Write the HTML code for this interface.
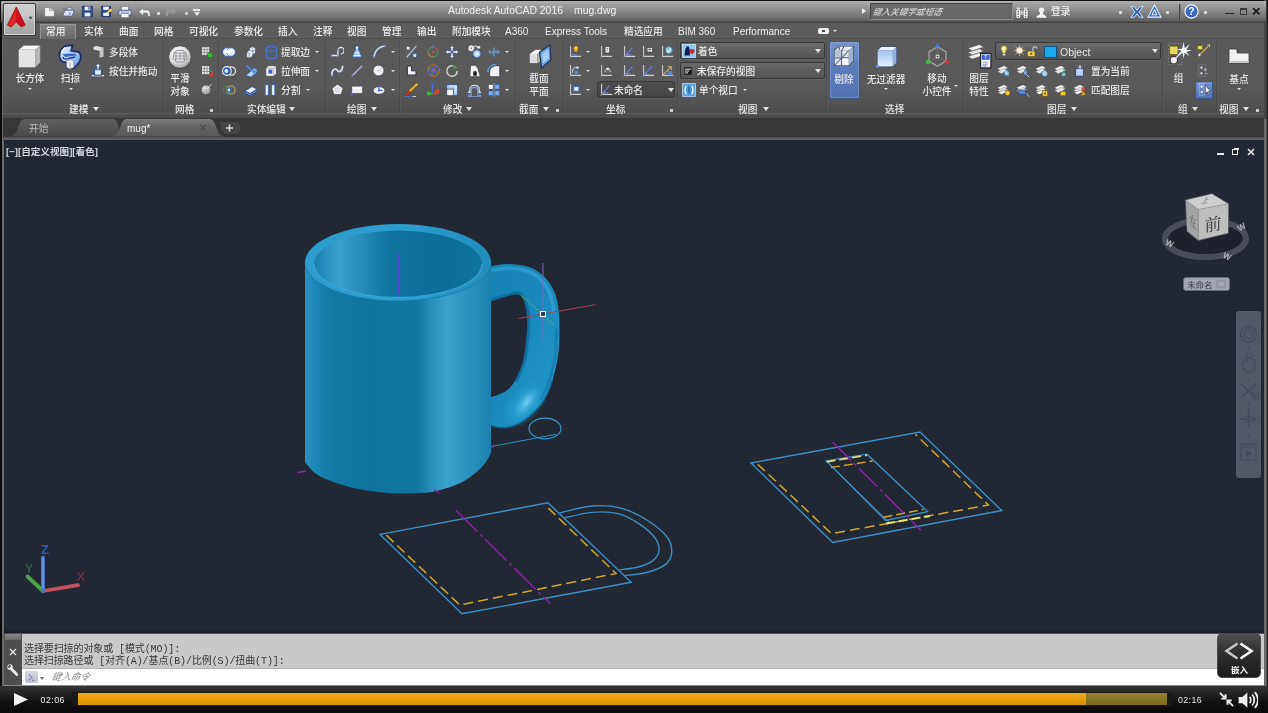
<!DOCTYPE html>
<html lang="zh-CN">
<head>
<meta charset="utf-8">
<title>Autodesk AutoCAD 2016 mug.dwg</title>
<style>
*{box-sizing:border-box;margin:0;padding:0}
html,body{width:1268px;height:713px;overflow:hidden;background:#000}
body{font-family:"Liberation Sans","Noto Sans CJK SC",sans-serif;font-size:10px;color:#e8e8e8;position:relative}
#app{position:absolute;left:0;top:0;width:1268px;height:713px;overflow:hidden;background:#0a0a0a}
#app div,#app span,#app svg,#app i,#app b{position:absolute;display:block;font-style:normal}
#frameL{left:1.5px;top:36px;width:2.5px;height:650px;background:#6c6c6c}
#frameR{left:1264px;top:0;width:4px;height:686px;background:linear-gradient(90deg,#6a6a6a 0,#6a6a6a 2.4px,#1a1a1a 2.8px,#1a1a1a 100%)}#frameR2{left:1264px;top:0;width:4px;height:119px;background:linear-gradient(90deg,#484848 0,#444 2.4px,#1a1a1a 2.8px,#1a1a1a 100%)}
#title{left:1.2px;top:1px;width:1264.8px;height:21.5px;background:linear-gradient(#b4b4b4 0,#a6a6a6 8%,#8e8e8e 40%,#747474 70%,#5e5e5e 90%,#484848 96%,#3a3a3a 100%)}
#menubar{left:2px;top:22.5px;width:1262px;height:16px;background:#5c5c5c}
#ribbon{left:3px;top:38px;width:1261px;height:81px;background:linear-gradient(#4a4a4a 0,#5a5a5a 1.5px,#595959 50px,#535353 62px,#4e4e4e 74.5px,#5a5a5a 75.5px,#4d4d4d 77px,#4a4a4a 79.5px,#383838 80px,#383838 81px)}
#tabbar{left:3px;top:119px;width:1261px;height:18px;background:#373737}
#tabline{left:3px;top:136.5px;width:1261px;height:4px;background:linear-gradient(#4a4e52,#5a6065 40%,#5a6065 70%,#3a404a)}
#draw{left:4px;top:140px;width:1260px;height:493px;background:#212733}
#cmd{left:4px;top:633px;width:1260px;height:53px;background:#c9c9c9}
#player{left:0;top:686px;width:1268px;height:27px;background:linear-gradient(#333 0,#222 30%,#111 60%,#0a0a0a 100%)}
#L{left:0;top:0;width:1268px;height:713px;filter:blur(.5px)}
.t{white-space:nowrap;line-height:12px;height:12px;font-size:9.7px;color:#e8e8e8;font-weight:500}
.sep{width:1px;height:72px;top:42px;background:#444;box-shadow:1px 0 0 #606060;opacity:.55}
.dd{width:0;height:0;border-left:3px solid transparent;border-right:3px solid transparent;border-top:4px solid #e4e4e4}
.dd2{width:0;height:0;border-left:2px solid transparent;border-right:2px solid transparent;border-top:2.5px solid #e0e0e0}
.combo{border:1px solid #383838;border-radius:2px;background:linear-gradient(#6a6a6a,#5e5e5e 45%,#545454);box-shadow:0 1px 0 #626262}
</style>
</head>
<body>
<div id="app">
<div id="frameL"></div><div id="frameR"></div><div id="frameR2"></div><div id="title"></div><div id="menubar"></div><div id="ribbon"></div><div id="tabbar"></div><div id="tabline"></div><div id="draw"></div><div id="cmd"></div><div id="player"></div>
<div id="L">
<span class="t" style="left:448px;top:5px;font-size:10.4px;color:#f2f2f2;">Autodesk AutoCAD 2016</span>
<span class="t" style="left:574px;top:5px;font-size:10.4px;color:#f2f2f2;">mug.dwg</span>
<div style="left:3px;top:3px;width:33px;height:32.5px;border:1.4px solid #3c3c3c;border-radius:2px;background:linear-gradient(#cfcfcf,#c2c2c2 45%,#b0b0b0 60%,#a6a6a6);box-shadow:inset 0 0 0 1px #d8d8d8"></div>
<svg style="left:6px;top:5px" width="28" height="28" viewBox="0 0 28 28"><path d="M3 22.5 C7 26.5 14 26.5 18 22.5" fill="none" stroke="#7ab48a" stroke-width="2.2" opacity=".5"/><path d="M5 24.5 C8 27 13 27 16 24.5" fill="none" stroke="#c890b0" stroke-width="1.5" opacity=".4"/><path d="M10.3 2 L19.1 20 L15.2 21.9 L10.3 17 L5.2 21.9 L1.5 20Z" fill="#cc0f1b" stroke="#a40c14" stroke-width="0.8" /><path d="M10.3 4 L10.3 17 L5.6 21 L2.6 19.6Z" fill="#e02626" /><path d="M22.6 11.8 L26.6 11.8 L24.6 14.6Z" fill="#3a4660" /></svg>
<svg style="left:42.5px;top:5px" width="13" height="13" viewBox="0 0 16 16"><path d="M2 3 H8 V6.5 H14 V14 H2Z" fill="#f4f4f4" stroke="#555" stroke-width="0.6" /><path d="M8 3 L14 6.5 H8Z" fill="#c8c8c8" /></svg>
<svg style="left:61.5px;top:5px" width="13" height="13" viewBox="0 0 16 16"><path d="M1 5 H6 L7.5 3.5 H12 V5.5" fill="#e4e8f8" stroke="#445" stroke-width="0.6" /><path d="M1 13.5 L3.5 6.5 H15 L12.5 13.5Z" fill="#dfe4fa" stroke="#3a4a8a" stroke-width="0.8" /><path d="M8 9 L11 10.5 L8 12" fill="none" stroke="#6a7ad0" stroke-width="1" /></svg>
<svg style="left:80.5px;top:4.5px" width="13" height="13" viewBox="0 0 16 16"><rect x="2" y="1.5" width="12" height="13" fill="#2f4c8e" stroke="#1c2c5a" stroke-width="0.8" /><rect x="4.5" y="2" width="7" height="4.5" fill="#f4f4f4" /><rect x="4.5" y="9.5" width="7" height="4.5" fill="#e8ecf8" /><rect x="9" y="2.6" width="1.6" height="3" fill="#2f4c8e" /></svg>
<svg style="left:99.5px;top:4.5px" width="13" height="13" viewBox="0 0 16 16"><rect x="2" y="1.5" width="11" height="13" fill="#2f4c8e" stroke="#1c2c5a" stroke-width="0.8" /><rect x="4" y="2" width="7" height="4" fill="#f4f4f4" /><rect x="4" y="9.5" width="7" height="4" fill="#e8ecf8" /><path d="M9 6 L15 4 L14 9Z" fill="#f0c030" stroke="#8a6a10" stroke-width="0.5" /><path d="M8 10 L14 6" fill="none" stroke="#f4d860" stroke-width="1.6" /></svg>
<svg style="left:118px;top:4.5px" width="14" height="14" viewBox="0 0 16 16"><rect x="4" y="1.5" width="8" height="4.5" fill="#f4f4f4" stroke="#556" stroke-width="0.6" /><path d="M1 6 H15 V11.5 H1Z" fill="#dfe6f6" stroke="#3a4a78" stroke-width="0.8" /><rect x="3.5" y="10" width="9" height="4.5" fill="#f8f8f8" stroke="#556" stroke-width="0.6" /><path d="M3 8 H13" fill="none" stroke="#7a8ad0" stroke-width="1" /></svg>
<svg style="left:137.5px;top:5.5px" width="13" height="13" viewBox="0 0 16 16"><path d="M1 7 L6.5 2 V5 H11 C14 5 15 8 15 11 V13 H12 V11 C12 9 11.5 8.5 10 8.5 H6.5 V12Z" fill="#f0f0f0" stroke="#555" stroke-width="0.5" /></svg>
<div style="left:157px;top:12px;width:3px;height:3px;background:#ddd;border-radius:1px"></div>
<svg style="left:165px;top:6px" width="12" height="12" viewBox="0 0 16 16"><path d="M15 7 L9.5 2 V5 H5 C2 5 1 8 1 11 V13 H4 V11 C4 9 4.5 8.5 6 8.5 H9.5 V12Z" fill="#9a9a9a" /></svg>
<div style="left:185px;top:12px;width:3px;height:3px;background:#ccc;border-radius:1px"></div>
<i style="left:193px;top:9px;width:7px;height:1.5px;background:#e8e8e8"></i>
<i class="dd" style="left:193.5px;top:11.5px"></i>
<div style="left:40px;top:23.5px;width:36px;height:15px;background:linear-gradient(#808080,#686868);border:1px solid #949494;border-bottom:none"></div>
<span class="t" style="left:46px;top:26px;color:#ececec;">常用</span>
<span class="t" style="left:84px;top:26px;color:#ececec;">实体</span>
<span class="t" style="left:119px;top:26px;color:#ececec;">曲面</span>
<span class="t" style="left:154px;top:26px;color:#ececec;">网格</span>
<span class="t" style="left:189px;top:26px;color:#ececec;">可视化</span>
<span class="t" style="left:234px;top:26px;color:#ececec;">参数化</span>
<span class="t" style="left:278px;top:26px;color:#ececec;">插入</span>
<span class="t" style="left:313px;top:26px;color:#ececec;">注释</span>
<span class="t" style="left:347px;top:26px;color:#ececec;">视图</span>
<span class="t" style="left:382px;top:26px;color:#ececec;">管理</span>
<span class="t" style="left:417px;top:26px;color:#ececec;">输出</span>
<span class="t" style="left:452px;top:26px;color:#ececec;">附加模块</span>
<span class="t" style="left:505px;top:26px;font-size:10px;color:#ececec;">A360</span>
<span class="t" style="left:545px;top:26px;font-size:10px;color:#ececec;">Express Tools</span>
<span class="t" style="left:624px;top:26px;color:#ececec;">精选应用</span>
<span class="t" style="left:678px;top:26px;font-size:10px;color:#ececec;">BIM 360</span>
<span class="t" style="left:733px;top:26px;font-size:10px;color:#ececec;">Performance</span>
<div style="left:818px;top:28px;width:11px;height:6px;background:#f0f0f0;border-radius:2px"></div>
<div style="left:822px;top:30px;width:3px;height:2px;background:#444"></div>
<i class="dd2" style="left:833px;top:30.3px"></i>
<i style="left:862px;top:7.5px;width:0;height:0;border-top:3.5px solid transparent;border-bottom:3.5px solid transparent;border-left:4.5px solid #eee"></i>
<div style="left:870px;top:3px;width:143px;height:17px;background:linear-gradient(#6a6a6a,#666);border:1px solid #484848;border-right-color:#8c8c8c;border-bottom-color:#8c8c8c"></div>
<span class="t" style="left:873px;top:6px;font-size:8.6px;color:#d6d6d6;font-style:italic;transform:skewX(-12deg);">键入关键字或短语</span>
<svg style="left:1015px;top:5.5px" width="14" height="14" viewBox="0 0 16 16"><rect x="1" y="3.5" width="5.6" height="10.5" fill="#f0f0f0" stroke="#3a3a3a" stroke-width="0.6" rx="1.8"/><rect x="9.4" y="3.5" width="5.6" height="10.5" fill="#f0f0f0" stroke="#3a3a3a" stroke-width="0.6" rx="1.8"/><rect x="6.4" y="5.5" width="3.2" height="4.5" fill="#c8c8c8" /><path d="M3.8 5.5 V12.5 M12.2 5.5 V12.5" fill="none" stroke="#4a4a4a" stroke-width="1.3" stroke-dasharray="1.6 1.3"/><rect x="2" y="1.8" width="3.6" height="2" fill="#e0e0e0" /><rect x="10.4" y="1.8" width="3.6" height="2" fill="#e0e0e0" /></svg>
<svg style="left:1035px;top:5.5px" width="13" height="13" viewBox="0 0 16 16"><circle cx="8" cy="5" r="3.3" fill="#f2f2f2" /><path d="M6 7.5 H10 V10 L14 12.5 V14.5 H2 V12.5 L6 10Z" fill="#f2f2f2" /></svg>
<span class="t" style="left:1051px;top:6px;color:#f0f0f0;">登录</span>
<div style="left:1119px;top:11px;width:3px;height:3px;background:#ddd;border-radius:1px"></div>
<svg style="left:1129.5px;top:4.5px" width="14" height="14" viewBox="0 0 16 16"><path d="M1 2 H5 L8 6 L11 2 H15 L10.2 8 L15 14 H11 L8 10 L5 14 H1 L5.8 8Z" fill="#2f63b4" stroke="#e4eefc" stroke-width="1" /></svg>
<svg style="left:1147px;top:3.5px" width="15" height="15" viewBox="0 0 16 16"><path d="M8 1 L15 14 H1Z" fill="#3a6cc0" stroke="#e8f0fc" stroke-width="1.1" /><path d="M8 5 L11.5 12 H4.5Z" fill="#e8f0fc" /><path d="M8 7.5 L9.8 11 H6.2Z" fill="#3a6cc0" /></svg>
<div style="left:1166px;top:11px;width:3px;height:3px;background:#ddd;border-radius:1px"></div>
<div style="left:1179px;top:4px;width:1px;height:16px;background:#444;box-shadow:1px 0 0 #777"></div>
<svg style="left:1183.5px;top:4px" width="15" height="15" viewBox="0 0 16 16"><circle cx="8" cy="8" r="7" fill="#3868c4" stroke="#f2f6ff" stroke-width="1.3" /><text x="8" y="12" font-size="11" font-weight="bold" text-anchor="middle" fill="#fff" font-family="Liberation Sans,sans-serif">?</text></svg>
<div style="left:1204px;top:11px;width:3px;height:3px;background:#ddd;border-radius:1px"></div>
<div style="left:1224.5px;top:12.5px;width:9px;height:1.8px;background:#222"></div>
<div style="left:1240px;top:8px;width:7px;height:7px;border:1px solid #3a3a3a;border-top-width:2px"></div>
<svg style="left:1252.25px;top:6.75px" width="8.5" height="8.5" viewBox="0 0 16 16"><path d="M2 2 L14 14 M14 2 L2 14" fill="none" stroke="#1c1c1c" stroke-width="3.2" /></svg>
<i class="sep" style="left:163px"></i>
<i class="sep" style="left:218px"></i>
<i class="sep" style="left:325px"></i>
<i class="sep" style="left:399px"></i>
<i class="sep" style="left:515px"></i>
<i class="sep" style="left:563px"></i>
<i class="sep" style="left:677px"></i>
<i class="sep" style="left:826px"></i>
<i class="sep" style="left:963px"></i>
<i class="sep" style="left:1162px"></i>
<i class="sep" style="left:1215.5px"></i>
<svg style="left:17px;top:43.5px" width="25" height="25" viewBox="0 0 24 24"><path d="M1 5 L6 1 L23 1 L23 18 L18 23 L1 23Z" fill="#3a3a3a" /><path d="M1.5 5.5 L6.3 1.5 L22.5 1.5 L17.7 5.5Z" fill="#f6f6f6" /><path d="M17.7 5.5 L22.5 1.5 L22.5 17.7 L17.7 22.5Z" fill="#b4b4b4" /><rect x="1.5" y="5.5" width="16.2" height="17" fill="#e4e4e6" /></svg>
<span class="t" style="left:-30px;width:120px;text-align:center;top:73px;">长方体</span>
<i class="dd2" style="left:28px;top:87.8px"></i>
<svg style="left:57px;top:43.5px" width="25" height="25" viewBox="0 0 24 24"><defs><linearGradient id="gsw" x1="0" y1="0" x2="1" y2="1"><stop offset="0" stop-color="#e4f0ff"/><stop offset=".5" stop-color="#a9ccf6"/><stop offset="1" stop-color="#5a92e0"/></linearGradient></defs><path d="M2.5 12.5 C1.5 7 6 2 10 1.5 L15 1.5 L13.5 6.5 L20.5 7.5 C24 9.5 23 15 21 18 L16.5 23 L9.5 23 L9 17.5 L5.5 17 C3.5 16 2.8 14.5 2.5 12.5Z" fill="url(#gsw)" stroke="#1c2c66" stroke-width="1.6" /><path d="M5 9.5 L17 9 L19 11 L8 12.5Z" fill="#3c6cc4" /><path d="M5.5 12.5 C6 14 7 14.5 8.5 14.5 L17.5 12.5" fill="none" stroke="#24408c" stroke-width="1.3" /><path d="M8 3.5 C6 5 4.5 7 4.5 9" fill="none" stroke="#f4f9ff" stroke-width="1.6" /><path d="M9 16.8 L12.5 15.6 L16.2 16.8 L16.2 22.6 L12.5 24 L9 22.6Z" fill="#f2f2f2" stroke="#6a6a72" stroke-width="0.6" /><path d="M9 16.8 L12.5 18 L16.2 16.8 M12.5 18 V24" fill="none" stroke="#a4a4ac" stroke-width="0.7" /><path d="M9 16.8 L12.5 15.6 L16.2 16.8 L12.5 18Z" fill="#fdfdfd" /></svg>
<span class="t" style="left:10.5px;width:120px;text-align:center;top:73px;">扫掠</span>
<i class="dd2" style="left:69px;top:87.8px"></i>
<svg style="left:92px;top:45px" width="13" height="13" viewBox="0 0 16 16"><path d="M1.5 2.5 L5 1 L14 3 L14 14.5 L9.5 15.5 L9.5 7.5 L1.5 5.8Z" fill="#ececec" stroke="#444" stroke-width="0.5" /><path d="M9.5 7.5 L14 3" fill="none" stroke="#8a8a8a" stroke-width="0.7" /><path d="M1.5 2.5 L9.8 4.6 L14 3" fill="none" stroke="#b0b0b0" stroke-width="0.6" /><path d="M9.5 7.5 V15.5 L14 14.5 V3Z" fill="#c4c4c8" /></svg>
<span class="t" style="left:109px;top:46.5px;">多段体</span>
<svg style="left:91px;top:63px" width="14" height="14" viewBox="0 0 16 16"><path d="M1 14.5 H15" fill="none" stroke="#dfe8ff" stroke-width="1.4" /><rect x="4" y="7" width="8" height="7" fill="#a8c8f0" stroke="#2d4f94" stroke-width="1" /><path d="M8 0.5 L11 4 H9.2 V7 H6.8 V4 H5Z" fill="#f4f4f4" stroke="#2d4f94" stroke-width="0.7" /><rect x="5.5" y="9" width="5" height="3.5" fill="#e8f2ff" /></svg>
<span class="t" style="left:109px;top:65.5px;">按住并拖动</span>
<span class="t" style="left:69px;top:103.6px;">建模</span>
<i class="dd" style="left:93px;top:106.5px"></i>
<svg style="left:168px;top:44.5px" width="24" height="24" viewBox="0 0 24 24"><defs><radialGradient id="gs" cx=".4" cy=".35" r=".7"><stop offset="0" stop-color="#fff"/><stop offset=".6" stop-color="#dcdcdc"/><stop offset="1" stop-color="#9c9c9c"/></radialGradient></defs><circle cx="12" cy="12" r="11.3" fill="url(#gs)" stroke="#3c3c3c" stroke-width="0.8" /><path d="M6 8 L18 8 L19 14 L5 14Z M8 8 V14 M12 8 V14 M16 8 V14 M5.5 11 H18.5 M7 14 L8 17 H16 L17 14 M9 5.5 H15 L18 8 M9 5.5 L6 8" fill="none" stroke="#8a8a92" stroke-width="0.9" /></svg>
<span class="t" style="left:120px;width:120px;text-align:center;top:72.5px;">平滑</span>
<span class="t" style="left:120px;width:120px;text-align:center;top:85.5px;">对象</span>
<svg style="left:200px;top:44.5px" width="14" height="14" viewBox="0 0 16 16"><rect x="2" y="2" width="9" height="10" fill="#ececec" stroke="#4a4a4a" stroke-width="0.8" /><path d="M2 5.3 H11 M2 8.6 H11 M5 2 V12 M8 2 V12" fill="none" stroke="#777" stroke-width="0.8" /><circle cx="11.5" cy="11.5" r="3.2" fill="#38b838" stroke="#1c5a1c" stroke-width="0.6" /></svg>
<svg style="left:200px;top:63.5px" width="14" height="14" viewBox="0 0 16 16"><rect x="2" y="2" width="9" height="10" fill="#ececec" stroke="#4a4a4a" stroke-width="0.8" /><path d="M2 5.3 H11 M2 8.6 H11 M5 2 V12 M8 2 V12" fill="none" stroke="#777" stroke-width="0.8" /><path d="M9 14 L15 8 L15 14Z" fill="#d63a2a" /><path d="M9 9 L14 6 L14 9Z" fill="#2c8a8a" /></svg>
<svg style="left:199.5px;top:82.5px" width="13" height="13" viewBox="0 0 16 16"><defs><radialGradient id="gm3" cx=".4" cy=".35" r=".7"><stop offset="0" stop-color="#f4f4f4"/><stop offset="1" stop-color="#8c8c8c"/></radialGradient></defs><circle cx="7.5" cy="8.5" r="6" fill="url(#gm3)" stroke="#444" stroke-width="0.7" /><path d="M9 7 L14 1.5" fill="none" stroke="#ddd" stroke-width="1.2" /><path d="M3 8.5 H12 M7.5 3 V14" fill="none" stroke="#999" stroke-width="0.6" /></svg>
<span class="t" style="left:175px;top:103.6px;">网格</span>
<i style="left:210px;top:109px;width:3px;height:3px;background:#ccc"></i>
<svg style="left:222px;top:44.5px" width="14" height="14" viewBox="0 0 16 16"><circle cx="5.6" cy="8" r="5" fill="#dce9fc" stroke="#3a62b4" stroke-width="1.1" /><circle cx="10.4" cy="8" r="5" fill="#dce9fc" stroke="#3a62b4" stroke-width="1.1" /><path d="M8 3.8 A5 5 0 0 1 8 12.2 A5 5 0 0 1 8 3.8Z" fill="#f2f7ff" /><circle cx="5" cy="7" r="2" fill="#f6faff" /><circle cx="11" cy="7" r="2" fill="#f6faff" /></svg>
<svg style="left:222px;top:63.5px" width="14" height="14" viewBox="0 0 16 16"><circle cx="10.6" cy="8" r="4.8" fill="none" stroke="#e4e4e4" stroke-width="1.4" /><circle cx="5.6" cy="8" r="5" fill="#2f5cb4" stroke="#eef3fc" stroke-width="1.2" /><circle cx="5" cy="8" r="2.2" fill="#dce8fc" /></svg>
<svg style="left:222px;top:82.5px" width="14" height="14" viewBox="0 0 16 16"><circle cx="5.8" cy="8" r="4.6" fill="none" stroke="#4a8a4a" stroke-width="1.1" /><circle cx="10.2" cy="8" r="4.6" fill="none" stroke="#c8b860" stroke-width="1.1" /><path d="M8 4.2 A4.6 4.6 0 0 1 8 11.8 A4.6 4.6 0 0 1 8 4.2Z" fill="#5a8ee0" stroke="#2a56b0" stroke-width="0.8" /><circle cx="8" cy="8" r="1.3" fill="#dcecff" /></svg>
<svg style="left:244px;top:44.5px" width="14" height="14" viewBox="0 0 16 16"><path d="M3 14 V8 L6 6 V4 L9 2 L13 3 V9 L10 11 V13 L6 15Z" fill="#e8eef8" stroke="#333" stroke-width="0.6" /><path d="M6 6 L10 7 L13 5 M10 7 V13" fill="none" stroke="#5a7ab8" stroke-width="0.8" /><path d="M3 8 L6 9.5 V15" fill="none" stroke="#5a7ab8" stroke-width="0.8" /><path d="M9 2 L10 7" fill="none" stroke="#9ab" stroke-width="0.6" /></svg>
<svg style="left:244px;top:63.5px" width="14" height="14" viewBox="0 0 16 16"><path d="M2 13 L9 7 L15 9 L8 15Z" fill="#b8d4f4" stroke="#2a4a8a" stroke-width="0.8" /><path d="M3 2 L13 11" fill="none" stroke="#3a6ac8" stroke-width="2" /><path d="M3 2 L13 11" fill="none" stroke="#9cc0f0" stroke-width="0.8" /><path d="M9 7 L11 4 L15 6 V9" fill="#7aaae8" stroke="#2a4a8a" stroke-width="0.6" /></svg>
<svg style="left:244px;top:82.5px" width="14" height="14" viewBox="0 0 16 16"><path d="M1 9 L9 4 L15 7 L7 12Z" fill="#f0f4fa" stroke="#2a4a8a" stroke-width="0.8" /><path d="M1 9 V11.5 L7 14.5 L15 9.5 V7 L7 12Z" fill="#5a8edc" stroke="#2a4a8a" stroke-width="0.8" /><path d="M3 8 L10 4" fill="none" stroke="#2a4a8a" stroke-width="0.6" /></svg>
<svg style="left:263.5px;top:44.5px" width="15" height="15" viewBox="0 0 16 16"><ellipse cx="8" cy="4" rx="5.5" ry="2.5" fill="none" stroke="#4a76d0" stroke-width="1.2" /><path d="M2.5 4 V12 A5.5 2.5 0 0 0 13.5 12 V4" fill="none" stroke="#4a76d0" stroke-width="1.2" /><path d="M2.5 12 A5.5 2.5 0 0 1 13.5 12" fill="none" stroke="#4a76d0" stroke-width="0.8" stroke-dasharray="1.5 1"/><path d="M6 3 V13.5 M10 3 V13.5" fill="none" stroke="#3a5eb0" stroke-width="0.8" /></svg>
<span class="t" style="left:281px;top:46.5px;">提取边</span>
<i class="dd2" style="left:315px;top:50.8px"></i>
<svg style="left:264px;top:63.5px" width="14" height="14" viewBox="0 0 16 16"><path d="M2 5 L5 2 H14 V11 L11 14 H2Z" fill="#f2f2f2" stroke="#3a3a3a" stroke-width="0.7" /><rect x="5" y="6.5" width="4.5" height="4.5" fill="#3a66c0" /><path d="M2 5 H11 V14 M11 5 L14 2" fill="none" stroke="#8a8a8a" stroke-width="0.7" /></svg>
<span class="t" style="left:281px;top:65.5px;">拉伸面</span>
<i class="dd2" style="left:315px;top:69.8px"></i>
<svg style="left:263px;top:82.5px" width="14" height="14" viewBox="0 0 16 16"><rect x="2.5" y="2" width="3.6" height="12" fill="#eef4fc" stroke="#3a66c0" stroke-width="1" /><rect x="9.9" y="2" width="3.6" height="12" fill="#eef4fc" stroke="#3a66c0" stroke-width="1" /></svg>
<span class="t" style="left:281px;top:84.5px;">分割</span>
<i class="dd2" style="left:306px;top:88.8px"></i>
<span class="t" style="left:247px;top:103.6px;">实体编辑</span>
<i class="dd" style="left:289px;top:106.5px"></i>
<svg style="left:330px;top:44.5px" width="14" height="14" viewBox="0 0 16 16"><path d="M1.5 12 H9 V6.5 A3.6 3.6 0 1 1 12.5 10" fill="none" stroke="#dfe6fa" stroke-width="1.5" /><rect x="0.5" y="11" width="2" height="2" fill="#7a8edc" /><rect x="8" y="11" width="2" height="2" fill="#7a8edc" /><rect x="8" y="4.5" width="2" height="2" fill="#7a8edc" /></svg>
<svg style="left:349.5px;top:44.5px" width="14" height="14" viewBox="0 0 16 16"><path d="M8 1 C10 1 10.5 3.5 9.5 4.5 L13.5 14 H2.5 L6.5 4.5 C5.5 3.5 6 1 8 1Z" fill="#9ccaf4" stroke="#2c5a98" stroke-width="0.8" /><path d="M5 9 H11 M4 12 H12" fill="none" stroke="#e8f4ff" stroke-width="1" /><circle cx="8" cy="3" r="1.4" fill="#e8f4ff" /></svg>
<svg style="left:371.5px;top:43.5px" width="15" height="15" viewBox="0 0 16 16"><path d="M2 14 C3 7 7 3 14 2" fill="none" stroke="#9fb6e6" stroke-width="2" /><path d="M2 14 C3 7 7 3 14 2" fill="none" stroke="#dce8ff" stroke-width="0.8" /><rect x="1" y="13" width="2" height="2" fill="#6a7ed0" /><rect x="13" y="1" width="2" height="2" fill="#6a7ed0" /></svg>
<i class="dd2" style="left:390.5px;top:50.8px"></i>
<svg style="left:329.5px;top:63px" width="15" height="15" viewBox="0 0 16 16"><path d="M2 13 C2 5 7 6 8 8 C9 10 13 10 13.5 3" fill="none" stroke="#c4cce8" stroke-width="2" /><path d="M2 13 C2 5 7 6 8 8 C9 10 13 10 13.5 3" fill="none" stroke="#eef2ff" stroke-width="0.7" /><rect x="1" y="12.5" width="2" height="2" fill="#7a8edc" /></svg>
<svg style="left:349.5px;top:63.5px" width="14" height="14" viewBox="0 0 16 16"><path d="M2.5 13.5 L13.5 2.5" fill="none" stroke="#b4b4e0" stroke-width="1.6" /><rect x="1.5" y="12.5" width="2" height="2" fill="#6a6ec8" /><rect x="12.5" y="1.5" width="2" height="2" fill="#8a8ed8" /></svg>
<svg style="left:372px;top:64px" width="13" height="13" viewBox="0 0 16 16"><defs><radialGradient id="gc"><stop offset="0" stop-color="#c8c8d0"/><stop offset=".35" stop-color="#f4f4f8"/><stop offset="1" stop-color="#e8e8ee"/></radialGradient></defs><circle cx="8" cy="8" r="6.6" fill="url(#gc)" stroke="#3c3c44" stroke-width="0.6" /><path d="M8 8 L12 5" fill="none" stroke="#aaa" stroke-width="0.7" /></svg>
<i class="dd2" style="left:390.5px;top:69.8px"></i>
<svg style="left:330.5px;top:83px" width="13" height="13" viewBox="0 0 16 16"><path d="M8 1.5 L14.8 6.5 L12.2 14.2 H3.8 L1.2 6.5Z" fill="#f4f4f8" stroke="#44444c" stroke-width="0.8" /><path d="M8 4 L12 7 L10.5 12 H5.5 L4 7Z" fill="#dcdce4" /></svg>
<svg style="left:349.5px;top:82.5px" width="14" height="14" viewBox="0 0 16 16"><rect x="2" y="3.5" width="12.5" height="8.5" fill="#ececf2" stroke="#44444c" stroke-width="0.8" /><rect x="0.8" y="11.5" width="2.4" height="2.4" fill="#5a6ed0" /><path d="M3 6 H13" fill="none" stroke="#fff" stroke-width="1.5" /></svg>
<svg style="left:371.5px;top:82.5px" width="14" height="14" viewBox="0 0 16 16"><ellipse cx="8" cy="8.5" rx="6.8" ry="4.4" fill="#ececf2" stroke="#34343c" stroke-width="0.8" /><path d="M8 2 V8.5 H12" fill="none" stroke="#3a62c8" stroke-width="1.3" /><circle cx="8" cy="8.5" r="1.2" fill="#3a62c8" /></svg>
<i class="dd2" style="left:390.5px;top:88.8px"></i>
<span class="t" style="left:347px;top:103.6px;">绘图</span>
<i class="dd" style="left:371px;top:106.5px"></i>
<svg style="left:404.5px;top:44.5px" width="14" height="14" viewBox="0 0 16 16"><path d="M2 14 L13 1" fill="none" stroke="#b8c4e8" stroke-width="1.4" /><path d="M1 9 H15" fill="none" stroke="#888" stroke-width="0.6" stroke-dasharray="1.5 1"/><rect x="2" y="2" width="3.4" height="3.4" fill="#f6f6f6" stroke="#666" stroke-width="0.5" /><rect x="9" y="9.5" width="4.5" height="4.5" fill="#a8ccf4" stroke="#2a4a8a" stroke-width="0.8" /><rect x="10.3" y="11" width="2" height="2" fill="#f0f8ff" /></svg>
<svg style="left:426px;top:44.5px" width="14" height="14" viewBox="0 0 16 16"><circle cx="8" cy="8" r="5.6" fill="none" stroke="#3c9a6a" stroke-width="1.2" /><path d="M8 2.4 A5.6 5.6 0 0 1 13.6 8" fill="none" stroke="#c04040" stroke-width="1.3" /><path d="M2.4 8 A5.6 5.6 0 0 0 8 13.6" fill="none" stroke="#c07830" stroke-width="1.2" /><circle cx="8" cy="8" r="1.5" fill="#c84848" /><path d="M8 0 V4" fill="none" stroke="#4a7ae0" stroke-width="1" /></svg>
<svg style="left:445px;top:44.5px" width="14" height="14" viewBox="0 0 16 16"><path d="M8 0.5 L10.8 3.8 H9.2 V6.8 H12.2 V5.2 L15.5 8 L12.2 10.8 V9.2 H9.2 V12.2 H10.8 L8 15.5 L5.2 12.2 H6.8 V9.2 H3.8 V10.8 L0.5 8 L3.8 5.2 V6.8 H6.8 V3.8 H5.2Z" fill="#f0f4fc" stroke="#3c4a78" stroke-width="0.7" /><circle cx="8" cy="8" r="1.6" fill="#4a6ec8" /></svg>
<svg style="left:467px;top:44px" width="15" height="15" viewBox="0 0 16 16"><circle cx="4.5" cy="4.5" r="3.4" fill="#f4f4f4" stroke="#555" stroke-width="0.7" /><circle cx="4.5" cy="4.5" r="1" fill="#888" /><path d="M7 3 C9 1.5 11 2 11.5 4" fill="none" stroke="#e8e8e8" stroke-width="1" /><circle cx="10.5" cy="10.5" r="4.4" fill="#a8ccf4" stroke="#2a4a8a" stroke-width="0.9" /><circle cx="10.5" cy="10.5" r="2" fill="#e8f4ff" /><circle cx="12.5" cy="3.5" r="1.6" fill="#e8e8e8" /></svg>
<svg style="left:487.5px;top:45.5px" width="12" height="12" viewBox="0 0 16 16"><path d="M1 8 H15 M8 2 V14" fill="none" stroke="#6a9cd0" stroke-width="1.8" /><path d="M3 5 L0.8 8 L3 11 M13 5 L15.2 8 L13 11" fill="none" stroke="#6a9cd0" stroke-width="1.2" /><path d="M4 12 L12 4" fill="none" stroke="#5a8cc0" stroke-width="1.2" /></svg>
<i class="dd2" style="left:505px;top:50.8px"></i>
<svg style="left:405.5px;top:65px" width="11" height="11" viewBox="0 0 16 16"><path d="M2 1.5 H8 V8.5 H14.5 V14.5 H2Z" fill="#f2f2f6" stroke="#2c2c3c" stroke-width="1.4" /></svg>
<svg style="left:425.5px;top:63px" width="15" height="15" viewBox="0 0 16 16"><circle cx="8" cy="8" r="6" fill="none" stroke="#c86a28" stroke-width="1.5" /><ellipse cx="8" cy="8" rx="6" ry="2.6" fill="none" stroke="#4a5ec8" stroke-width="1.3" transform="rotate(-30 8 8)"/><ellipse cx="8" cy="8" rx="6" ry="2.6" fill="none" stroke="#3c8a5a" stroke-width="1" transform="rotate(60 8 8)"/><circle cx="8" cy="8" r="1.8" fill="#b04aa0" /><path d="M8 0 V3" fill="none" stroke="#d04040" stroke-width="1.2" /></svg>
<svg style="left:445px;top:63.5px" width="14" height="14" viewBox="0 0 16 16"><path d="M12.6 4.2 A6 6 0 1 0 14 8" fill="none" stroke="#d8d8cc" stroke-width="1.6" /><path d="M8 2 A6 6 0 0 1 12.6 4.2" fill="none" stroke="#4a9a4a" stroke-width="1.6" /><path d="M10.5 1 L14 4.5 L9.8 5.6Z" fill="#4a9a4a" /></svg>
<svg style="left:467.5px;top:63.5px" width="14" height="14" viewBox="0 0 16 16"><path d="M3 1.5 H9 L11 4 L14 14.5 H2 L3 1.5Z" fill="#f6f6f6" stroke="#333" stroke-width="0.8" /><path d="M9 1.5 V4 H11" fill="none" stroke="#999" stroke-width="0.7" /><path d="M6 9 C6 7.5 10 7.5 10 9 V13.5 H6Z" fill="#1a1a1a" /><circle cx="8" cy="8.5" r="1" fill="#4a6ec8" /></svg>
<svg style="left:486.5px;top:63.5px" width="14" height="14" viewBox="0 0 16 16"><path d="M3 14.5 V9 C3 5 6 2.5 10 2 L14.5 2 V14.5Z" fill="#f0f0f4" stroke="#2c2c34" stroke-width="0.8" /><path d="M1 9 C1 4 5 0.8 10.5 0.6" fill="none" stroke="#5a9ae0" stroke-width="1.6" /></svg>
<i class="dd2" style="left:505px;top:69.8px"></i>
<svg style="left:404px;top:82px" width="15" height="15" viewBox="0 0 16 16"><path d="M13.5 1 L15 2.5 L7 11 L5 9Z" fill="#f0b428" stroke="#8a5a10" stroke-width="0.6" /><path d="M12 2.5 L13.5 4" fill="none" stroke="#fff2b0" stroke-width="0.8" /><path d="M5 9 L7 11 L4 14.5 C2 15.5 1 14.5 1.5 13Z" fill="#c83a24" stroke="#6a1a10" stroke-width="0.5" /><path d="M1 15.5 H8" fill="none" stroke="#4a7ac8" stroke-width="1" /><path d="M9 15.5 H13" fill="none" stroke="#d8d8d8" stroke-width="1" /></svg>
<svg style="left:425.5px;top:82px" width="15" height="15" viewBox="0 0 16 16"><path d="M7 13 V2" fill="none" stroke="#4a6ed8" stroke-width="1.6" /><path d="M7 13 L14.5 11" fill="none" stroke="#d63a2a" stroke-width="2" /><path d="M7 13 L1.5 10.5" fill="none" stroke="#3aa83a" stroke-width="2" /><circle cx="3" cy="12.5" r="2" fill="#3ab83a" /><path d="M9 9 L14 7 L14 12 L9 14Z" fill="#d04838" /><path d="M5 0.5 L7 3.5 L9 0.5" fill="none" stroke="#4a6ed8" stroke-width="0.9" /></svg>
<svg style="left:445px;top:82.5px" width="14" height="14" viewBox="0 0 16 16"><rect x="2" y="2" width="12.5" height="12.5" fill="#a8c8f0" stroke="#2a4a8a" stroke-width="0.8" /><rect x="2" y="7" width="7.5" height="7.5" fill="#f6f6f8" stroke="#3a3a4a" stroke-width="0.8" /><path d="M5 3.5 H12.5 V11" fill="none" stroke="#e4f0ff" stroke-width="1.2" /></svg>
<svg style="left:467px;top:82px" width="15" height="15" viewBox="0 0 16 16"><path d="M1 14 H4.5 V9 C4.5 4.5 11.5 4.5 11.5 9 V14 H15" fill="none" stroke="#6a9ae0" stroke-width="1.4" /><path d="M1 11 H3 V8 C3 2 13 2 13 8 V11 H15" fill="none" stroke="#dfe8fa" stroke-width="1.2" /><path d="M1 15.5 H15" fill="none" stroke="#8aa8d8" stroke-width="0.8" /></svg>
<svg style="left:486.5px;top:82.5px" width="14" height="14" viewBox="0 0 16 16"><rect x="1.5" y="1.5" width="5.5" height="5.5" fill="#f2f4f8" stroke="#333" stroke-width="0.6" /><rect x="9" y="1.5" width="5.5" height="5.5" fill="#7aaef0" stroke="#2a4a8a" stroke-width="0.6" /><rect x="1.5" y="9" width="5.5" height="5.5" fill="#7aaef0" stroke="#2a4a8a" stroke-width="0.6" /><rect x="9" y="9" width="5.5" height="5.5" fill="#7aaef0" stroke="#2a4a8a" stroke-width="0.6" /><path d="M8 0 V16" fill="none" stroke="#9cc4f4" stroke-width="0.7" /></svg>
<i class="dd2" style="left:505px;top:88.8px"></i>
<span class="t" style="left:443px;top:103.6px;">修改</span>
<i class="dd" style="left:466px;top:106.5px"></i>
<svg style="left:527px;top:43.5px" width="25" height="25" viewBox="0 0 24 24"><path d="M2 9 L8 5 L15 5 L15 16 L9 19 L2 19Z" fill="#3a3a3a" /><path d="M2.5 9.5 L8 5.6 L14.5 5.6 L10 9.5Z" fill="#f4f4f4" /><rect x="2.5" y="9.5" width="7.5" height="9" fill="#dedede" /><path d="M10 9.5 L14.5 5.6 L14.5 15.5 L10 18.5Z" fill="#b8b8b8" /><path d="M12 8 L22 1 L23 15 L14 23Z" fill="#6ea5e6" stroke="#23364e" stroke-width="1.2" /><path d="M14.5 9.5 L20.5 5 L21 13.5 L15.5 18.5Z" fill="#a9d0f6" /></svg>
<span class="t" style="left:479px;width:120px;text-align:center;top:73px;">截面</span>
<span class="t" style="left:479px;width:120px;text-align:center;top:86px;">平面</span>
<span class="t" style="left:519px;top:103.6px;">截面</span>
<i class="dd" style="left:543px;top:106.5px"></i>
<i style="left:556px;top:109px;width:3px;height:3px;background:#ccc"></i>
<svg style="left:568px;top:44.5px" width="14" height="14" viewBox="0 0 16 16"><path d="M3 1 V13 H15" fill="none" stroke="#cfcfd4" stroke-width="1.2" /><path d="M3 13 L1.5 15" fill="none" stroke="#9a9aa0" stroke-width="0.8" /><path d="M9 1 C11.5 1 12.5 4 10.5 6 V8 H7.5 V6 C5.5 4 6.5 1 9 1Z" fill="#f4c030" stroke="#8a5a10" stroke-width="0.5" /><path d="M5 11 H11" fill="none" stroke="#6a8ae0" stroke-width="1.2" /></svg>
<i class="dd2" style="left:585.5px;top:50.8px"></i>
<svg style="left:568px;top:63.5px" width="14" height="14" viewBox="0 0 16 16"><path d="M3 1 V13 H15" fill="none" stroke="#cfcfd4" stroke-width="1.2" /><path d="M3 13 L1.5 15" fill="none" stroke="#9a9aa0" stroke-width="0.8" /><path d="M5 10 C5 5 8 3 11 4" fill="none" stroke="#e0e0e0" stroke-width="1.1" /><path d="M10 2 L13 4.5 L9.5 6Z" fill="#e0e0e0" /><rect x="7.5" y="7.5" width="4" height="4" fill="#4a8ad8" /></svg>
<i class="dd2" style="left:585.5px;top:69.8px"></i>
<svg style="left:568px;top:82.5px" width="14" height="14" viewBox="0 0 16 16"><path d="M3 1 V13 H15" fill="none" stroke="#cfcfd4" stroke-width="1.2" /><path d="M3 13 L1.5 15" fill="none" stroke="#9a9aa0" stroke-width="0.8" /><rect x="6.5" y="4" width="6" height="5.5" fill="#a8ccf4" stroke="#3a6ab8" stroke-width="0.8" /><rect x="8" y="5.3" width="3" height="2.6" fill="#f0f8ff" /></svg>
<i class="dd2" style="left:585.5px;top:88.8px"></i>
<svg style="left:599px;top:44.5px" width="14" height="14" viewBox="0 0 16 16"><path d="M3 1 V13 H15" fill="none" stroke="#cfcfd4" stroke-width="1.2" /><path d="M3 13 L1.5 15" fill="none" stroke="#9a9aa0" stroke-width="0.8" /><rect x="7" y="2" width="5" height="7" fill="#f2f2f2" stroke="#444" stroke-width="0.7" /><path d="M8.5 4 H10.5 M8.5 6 H10.5" fill="none" stroke="#555" stroke-width="0.8" /></svg>
<svg style="left:621.5px;top:44.5px" width="14" height="14" viewBox="0 0 16 16"><path d="M3 1 V13 H15" fill="none" stroke="#cfcfd4" stroke-width="1.2" /><path d="M3 13 L1.5 15" fill="none" stroke="#9a9aa0" stroke-width="0.8" /><path d="M3 13 L12 3" fill="none" stroke="#6a7ed8" stroke-width="1.4" /><path d="M5 11 H10" fill="none" stroke="#8a9ae0" stroke-width="0.8" /></svg>
<svg style="left:640.5px;top:44.5px" width="14" height="14" viewBox="0 0 16 16"><path d="M3 1 V13 H15" fill="none" stroke="#cfcfd4" stroke-width="1.2" /><path d="M3 13 L1.5 15" fill="none" stroke="#9a9aa0" stroke-width="0.8" /><rect x="7" y="3" width="6" height="5" fill="#f2f2f2" stroke="#444" stroke-width="0.7" /><rect x="8.5" y="4.3" width="3" height="1.6" fill="#555" /></svg>
<svg style="left:659.5px;top:44.5px" width="14" height="14" viewBox="0 0 16 16"><path d="M3 1 V13 H15" fill="none" stroke="#cfcfd4" stroke-width="1.2" /><path d="M3 13 L1.5 15" fill="none" stroke="#9a9aa0" stroke-width="0.8" /><circle cx="10" cy="6" r="4.2" fill="#8ac8e8" stroke="#2a6a9a" stroke-width="0.8" /><path d="M8 6 L9.6 7.8 L12.4 4.2" fill="none" stroke="#f4ffff" stroke-width="1.2" /></svg>
<svg style="left:599px;top:63.5px" width="14" height="14" viewBox="0 0 16 16"><path d="M3 1 V13 H15" fill="none" stroke="#cfcfd4" stroke-width="1.2" /><path d="M3 13 L1.5 15" fill="none" stroke="#9a9aa0" stroke-width="0.8" /><path d="M7 9 C7 4 13 4 13 9" fill="none" stroke="#e4e4e4" stroke-width="1.1" /><circle cx="10" cy="5.6" r="1.5" fill="#e4e4e4" /><path d="M5 9 H14" fill="none" stroke="#999" stroke-width="0.7" /></svg>
<svg style="left:621.5px;top:63.5px" width="14" height="14" viewBox="0 0 16 16"><path d="M3 1 V13 H15" fill="none" stroke="#cfcfd4" stroke-width="1.2" /><path d="M3 13 L1.5 15" fill="none" stroke="#9a9aa0" stroke-width="0.8" /><path d="M3 13 L12 3" fill="none" stroke="#6a7ed8" stroke-width="1.4" /><path d="M5 11 H10" fill="none" stroke="#8a9ae0" stroke-width="0.8" /></svg>
<svg style="left:640.5px;top:63.5px" width="14" height="14" viewBox="0 0 16 16"><path d="M3 1 V13 H15" fill="none" stroke="#cfcfd4" stroke-width="1.2" /><path d="M3 13 L1.5 15" fill="none" stroke="#9a9aa0" stroke-width="0.8" /><path d="M3 13 L13 2" fill="none" stroke="#5a76d8" stroke-width="1.6" /><path d="M6 13 V9" fill="none" stroke="#8a9ae0" stroke-width="1" /></svg>
<svg style="left:659.5px;top:63.5px" width="14" height="14" viewBox="0 0 16 16"><path d="M3 1 V13 H15" fill="none" stroke="#cfcfd4" stroke-width="1.2" /><path d="M3 13 L1.5 15" fill="none" stroke="#9a9aa0" stroke-width="0.8" /><path d="M3 13 L13 3" fill="none" stroke="#c8b860" stroke-width="1.3" /><path d="M9 3 H13 V7" fill="none" stroke="#c8b860" stroke-width="1.1" /><rect x="9" y="8" width="5" height="5" fill="#5a86d0" /></svg>
<div style="left:597px;top:81px;width:78px;height:17px;border:1px solid #3a3a3a;border-radius:2px;background:linear-gradient(#4e4e4e,#454545);box-shadow:0 1px 0 #5e5e5e"></div>
<svg style="left:599px;top:82.5px" width="14" height="14" viewBox="0 0 16 16"><path d="M3 1 V13 H15" fill="none" stroke="#cfcfd4" stroke-width="1.2" /><path d="M3 13 L1.5 15" fill="none" stroke="#9a9aa0" stroke-width="0.8" /><path d="M3 13 L12 3" fill="none" stroke="#6a7ed8" stroke-width="1.4" /><path d="M5 11 H10" fill="none" stroke="#8a9ae0" stroke-width="0.8" /></svg>
<span class="t" style="left:614px;top:84.5px;">未命名</span>
<i class="dd" style="left:668px;top:88px"></i>
<span class="t" style="left:606px;top:103.6px;">坐标</span>
<i style="left:670px;top:109px;width:3px;height:3px;background:#ccc"></i>
<div class="combo" style="left:680px;top:42px;width:145px;height:17px"></div>
<svg style="left:681.5px;top:43.5px" width="14" height="14" viewBox="0 0 16 16"><rect x="0.5" y="0.5" width="15" height="15" fill="#8ac8e8" stroke="#d8f0ff" stroke-width="0.8" /><path d="M3 13 C3 8 4 3 6.5 2.5 C9 3 9 8 9 13Z" fill="#101c58" /><path d="M11.5 12 C7 8 8.5 4.5 11.5 6.5 C14.5 4.5 16 8 11.5 12Z" fill="#d81c2c" /></svg>
<span class="t" style="left:698px;top:45.5px;">着色</span>
<i class="dd" style="left:815px;top:49px"></i>
<div class="combo" style="left:680px;top:62px;width:145px;height:17px"></div>
<svg style="left:683px;top:65.5px" width="10" height="10" viewBox="0 0 16 16"><rect x="2" y="2" width="12" height="12" fill="#181818" /><path d="M3 5 H13 M3 8 H10 M3 11 H8" fill="none" stroke="#ddd" stroke-width="1.6" /></svg>
<span class="t" style="left:697px;top:65.5px;">未保存的视图</span>
<i class="dd" style="left:815px;top:69px"></i>
<svg style="left:682px;top:83px" width="14" height="14" viewBox="0 0 16 16"><rect x="0.8" y="0.8" width="14.4" height="14.4" fill="#4a9ae0" stroke="#c8e4ff" stroke-width="1" /><path d="M5 3 C3 5 3 11 5 13 M11 3 C13 5 13 11 11 13" fill="none" stroke="#f4faff" stroke-width="1.6" /><path d="M8 4 V12" fill="none" stroke="#1a4a8a" stroke-width="1" /></svg>
<span class="t" style="left:699px;top:84.5px;">单个视口</span>
<i class="dd2" style="left:743px;top:89.3px"></i>
<span class="t" style="left:738px;top:103.6px;">视图</span>
<i class="dd" style="left:763px;top:106.5px"></i>
<div style="left:829px;top:41px;width:31px;height:58px;border:1px solid #3d5588;border-radius:2px;background:linear-gradient(#7592cc,#5c7cba 45%,#5272b2 100%);box-shadow:inset 0 0 0 1px rgba(160,185,230,.35)"></div>
<svg style="left:831.5px;top:44px" width="24" height="24" viewBox="0 0 24 24"><path d="M2 6 L7 2 L22 2 L22 17 L17 22 L2 22Z" fill="#2b3350" /><path d="M2.6 6.4 L7.2 2.6 L21.4 2.6 L16.8 6.4Z" fill="#e8ecf4" /><path d="M16.8 6.4 L21.4 2.6 L21.4 16.8 L16.8 21.4Z" fill="#9fb0cc" /><rect x="2.6" y="6.4" width="14.2" height="15" fill="#dfe4ee" /><path d="M2.6 21.4 L16.8 6.4 M9.7 6.4 V21.4 M2.6 13.9 H16.8 M7.2 2.6 V6 M12 2.6 L9.7 6.4" fill="none" stroke="#3a4668" stroke-width="1" /><rect x="10.2" y="14.4" width="6" height="6.4" fill="#f8f8f8" /><rect x="3.2" y="7" width="6" height="6.4" fill="#b8c2d8" /></svg>
<span class="t" style="left:784px;width:120px;text-align:center;top:74px;">剔除</span>
<svg style="left:874.5px;top:44.5px" width="24" height="24" viewBox="0 0 24 24"><path d="M2 5 L6 1.5 L22 1.5 L22 18 L18 22 L2 22Z" fill="#3b4a66" /><path d="M2.6 5.4 L6.2 2.1 L21.4 2.1 L17.8 5.4Z" fill="#e8f2ff" /><path d="M17.8 5.4 L21.4 2.1 L21.4 17.7 L17.8 21.4Z" fill="#8fb0de" /><defs><linearGradient id="gnf" x1="0" y1="0" x2="0" y2="1"><stop offset="0" stop-color="#9fc4f2"/><stop offset="1" stop-color="#e4f0ff"/></linearGradient></defs><rect x="2.6" y="5.4" width="15.2" height="16" fill="url(#gnf)" /><circle cx="2.5" cy="21.5" r="1.6" fill="#5a9ae0" /></svg>
<span class="t" style="left:826px;width:120px;text-align:center;top:74px;">无过滤器</span>
<i class="dd2" style="left:884px;top:87.8px"></i>
<svg style="left:923.5px;top:42.5px" width="27" height="27" viewBox="0 0 24 24"><path d="M12 3.5 L19.5 7.8 L19.5 16.2 L12 20.5 L4.5 16.2 L4.5 7.8Z" fill="none" stroke="#9a9a9a" stroke-width="1.3" /><path d="M12 12 V3 M12 12 L4.5 16.5 M12 12 L19.5 16.5" fill="none" stroke="#777" stroke-width="0.8" /><path d="M12 0 L14 4 H10Z" fill="#3d7fe0" /><circle cx="3.6" cy="17" r="1.8" fill="#38c23a" /><circle cx="20.4" cy="17" r="1.8" fill="#e03030" /><rect x="10" y="10" width="4" height="4" fill="#f4f4f4" stroke="#555" stroke-width="0.6" /><circle cx="12" cy="12" r="0.9" fill="#444" /></svg>
<span class="t" style="left:877px;width:120px;text-align:center;top:73px;">移动</span>
<span class="t" style="left:877px;width:120px;text-align:center;top:86px;">小控件</span>
<i class="dd2" style="left:954px;top:84.8px"></i>
<span class="t" style="left:885px;top:103.6px;">选择</span>
<svg style="left:967px;top:44px" width="25" height="25" viewBox="0 0 24 24"><path d="M1 4 L12 0.5 L16 3 L5 6.5Z" fill="#f4f4f4" stroke="#555" stroke-width="0.5" /><path d="M1 8 L12 4.5 L16 7 L5 10.5Z" fill="#e6e6e6" stroke="#555" stroke-width="0.5" /><path d="M1 12 L12 8.5 L16 11 L5 14.5Z" fill="#f0f0f0" stroke="#555" stroke-width="0.5" /><rect x="13" y="9" width="10" height="14" fill="#f4f4f4" stroke="#222" stroke-width="1.2" /><rect x="14.2" y="10.2" width="7.6" height="5" fill="#3b66c8" /><path d="M15 17.5 H20 M15 19.5 H20 M15 21 H19" fill="none" stroke="#8aa0c8" stroke-width="1" /><path d="M17 11 H19 M18 11 V14" fill="none" stroke="#cfe0ff" stroke-width="0.8" /></svg>
<span class="t" style="left:919px;width:120px;text-align:center;top:73px;">图层</span>
<span class="t" style="left:919px;width:120px;text-align:center;top:86px;">特性</span>
<div class="combo" style="left:995px;top:42px;width:166px;height:18px"></div>
<svg style="left:998px;top:44.5px" width="12" height="12" viewBox="0 0 16 16"><path d="M8 1 C11.8 1 13 5 10.6 7.8 L10 11 H6 L5.4 7.8 C3 5 4.2 1 8 1Z" fill="#f8e878" stroke="#7a6a20" stroke-width="0.6" /><rect x="6.2" y="11.4" width="3.6" height="3" fill="#d8d8d8" stroke="#666" stroke-width="0.5" /><circle cx="7" cy="4.5" r="1.6" fill="#fffce0" /></svg>
<svg style="left:1012.5px;top:44px" width="13" height="13" viewBox="0 0 16 16"><circle cx="8" cy="8" r="4" fill="#f8dcb0" /><path d="M8 1 V15 M1 8 H15 M3 3 L13 13 M13 3 L3 13" fill="none" stroke="#e8c898" stroke-width="1" opacity=".8"/><circle cx="8" cy="8" r="2.8" fill="#fff4e0" /></svg>
<svg style="left:1026px;top:44.5px" width="13" height="13" viewBox="0 0 16 16"><rect x="2" y="7.5" width="9" height="6.5" fill="#f0d850" stroke="#6a5a18" stroke-width="0.7" /><path d="M8.5 7.5 V4.5 C8.5 1.5 13.5 1.5 13.5 4.5" fill="none" stroke="#d8d8d8" stroke-width="1.3" /><rect x="5.3" y="9.5" width="2.4" height="2.4" fill="#6a5a18" /></svg>
<div style="left:1044px;top:46px;width:13px;height:12px;background:#1ca8ee;border:1px solid #0d4f78"></div>
<span class="t" style="left:1060px;top:45.5px;font-size:10.5px;">Object</span>
<i class="dd" style="left:1152px;top:49px"></i>
<svg style="left:997px;top:63.5px" width="14" height="14" viewBox="0 0 16 16"><path d="M0.5 5.5 L8 2 L12.5 4.5 L5 8Z" fill="#fafafa" stroke="#555" stroke-width="0.4" /><path d="M0.5 8.5 L8 5 L12.5 7.5 L5 11Z" fill="#e4e4e4" stroke="#555" stroke-width="0.4" /><circle cx="11" cy="10.5" r="3" fill="#8ac4e8" stroke="#2a5a8a" stroke-width="0.6" /><path d="M9 8 L13 13" fill="none" stroke="#eee" stroke-width="0.8" /></svg>
<svg style="left:997px;top:82.5px" width="14" height="14" viewBox="0 0 16 16"><path d="M0.5 5.5 L8 2 L12.5 4.5 L5 8Z" fill="#fafafa" stroke="#555" stroke-width="0.4" /><path d="M0.5 8.5 L8 5 L12.5 7.5 L5 11Z" fill="#e4e4e4" stroke="#555" stroke-width="0.4" /><path d="M1 11 L8 8 L12 10 L5 13Z" fill="#f2f2f2" stroke="#555" stroke-width="0.5" /><circle cx="12" cy="11.5" r="2.8" fill="#f4d030" stroke="#7a5a10" stroke-width="0.5" /></svg>
<svg style="left:1016px;top:63.5px" width="14" height="14" viewBox="0 0 16 16"><path d="M0.5 5.5 L8 2 L12.5 4.5 L5 8Z" fill="#fafafa" stroke="#555" stroke-width="0.4" /><path d="M0.5 8.5 L8 5 L12.5 7.5 L5 11Z" fill="#e4e4e4" stroke="#555" stroke-width="0.4" /><path d="M10 7 L13 9 L11 13 L8.5 11Z" fill="#8ab4e8" stroke="#2a4a8a" stroke-width="0.6" /><path d="M12 12 L15 15" fill="none" stroke="#ddd" stroke-width="1" /></svg>
<svg style="left:1016px;top:82.5px" width="14" height="14" viewBox="0 0 16 16"><path d="M0.5 5.5 L8 2 L12.5 4.5 L5 8Z" fill="#fafafa" stroke="#555" stroke-width="0.4" /><path d="M0.5 8.5 L8 5 L12.5 7.5 L5 11Z" fill="#e4e4e4" stroke="#555" stroke-width="0.4" /><path d="M3 8 H11 V13 H3Z" fill="#5a8ed8" stroke="#2a3a7a" stroke-width="0.7" /><path d="M12 12 L15 15.5" fill="none" stroke="#ddd" stroke-width="1.1" /></svg>
<svg style="left:1035px;top:63.5px" width="14" height="14" viewBox="0 0 16 16"><path d="M0.5 5.5 L8 2 L12.5 4.5 L5 8Z" fill="#fafafa" stroke="#555" stroke-width="0.4" /><path d="M0.5 8.5 L8 5 L12.5 7.5 L5 11Z" fill="#e4e4e4" stroke="#555" stroke-width="0.4" /><circle cx="11" cy="11" r="3.2" fill="#a8d0f0" stroke="#3a6a9a" stroke-width="0.6" /></svg>
<svg style="left:1035px;top:82.5px" width="14" height="14" viewBox="0 0 16 16"><path d="M0.5 5.5 L8 2 L12.5 4.5 L5 8Z" fill="#fafafa" stroke="#555" stroke-width="0.4" /><path d="M0.5 8.5 L8 5 L12.5 7.5 L5 11Z" fill="#e4e4e4" stroke="#555" stroke-width="0.4" /><path d="M1 11 L8 8 L12 10 L5 13Z" fill="#f2f2f2" stroke="#555" stroke-width="0.5" /><rect x="8.5" y="9" width="6" height="6" fill="#f0c830" stroke="#7a5a10" stroke-width="0.6" /><circle cx="11.5" cy="12" r="1.2" fill="#7a5a10" /></svg>
<svg style="left:1054px;top:63.5px" width="14" height="14" viewBox="0 0 16 16"><path d="M0.5 5.5 L8 2 L12.5 4.5 L5 8Z" fill="#fafafa" stroke="#555" stroke-width="0.4" /><path d="M0.5 8.5 L8 5 L12.5 7.5 L5 11Z" fill="#e4e4e4" stroke="#555" stroke-width="0.4" /><rect x="8.5" y="9.5" width="5" height="4.5" fill="#8ab8b8" stroke="#2a5a5a" stroke-width="0.6" /><path d="M9.5 9.5 V8 C9.5 6 12.5 6 12.5 8" fill="none" stroke="#cfe" stroke-width="0.9" /></svg>
<svg style="left:1054px;top:82.5px" width="14" height="14" viewBox="0 0 16 16"><path d="M0.5 5.5 L8 2 L12.5 4.5 L5 8Z" fill="#fafafa" stroke="#555" stroke-width="0.4" /><path d="M0.5 8.5 L8 5 L12.5 7.5 L5 11Z" fill="#e4e4e4" stroke="#555" stroke-width="0.4" /><rect x="7.5" y="9.5" width="6" height="5" fill="#f0c830" stroke="#7a5a10" stroke-width="0.6" /><path d="M9 9.5 V7.8 C9 6 12.5 6 12.5 7" fill="none" stroke="#e8e8e8" stroke-width="1" /></svg>
<svg style="left:1073px;top:63.5px" width="14" height="14" viewBox="0 0 16 16"><rect x="3" y="5" width="9" height="9" fill="#a8c0e8" stroke="#2a3a7a" stroke-width="0.8" /><path d="M5 8 H10 M5 10.5 H10" fill="none" stroke="#f4f8ff" stroke-width="1.2" /><path d="M8 1 V5 M6 3 L8 5 L10 3" fill="none" stroke="#e8e8e8" stroke-width="1.1" /></svg>
<svg style="left:1073px;top:82.5px" width="14" height="14" viewBox="0 0 16 16"><path d="M0.5 5.5 L8 2 L12.5 4.5 L5 8Z" fill="#fafafa" stroke="#555" stroke-width="0.4" /><path d="M0.5 8.5 L8 5 L12.5 7.5 L5 11Z" fill="#e4e4e4" stroke="#555" stroke-width="0.4" /><path d="M1 11 L8 8 L12 10 L5 13Z" fill="#f2f2f2" stroke="#555" stroke-width="0.5" /><path d="M9 15 L11 9 L15 13Z" fill="#f0a830" stroke="#7a4a10" stroke-width="0.5" /><circle cx="12" cy="7" r="2" fill="#d84a30" /></svg>
<span class="t" style="left:1091px;top:65.5px;">置为当前</span>
<span class="t" style="left:1091px;top:84.5px;">匹配图层</span>
<span class="t" style="left:1047px;top:103.6px;">图层</span>
<i class="dd" style="left:1071px;top:106.5px"></i>
<svg style="left:1166.5px;top:41.5px" width="25" height="25" viewBox="0 0 24 24"><rect x="1.5" y="1.5" width="13" height="20" fill="none" stroke="#8c8c8c" stroke-width="0.8" stroke-dasharray="1.5 1.5"/><rect x="2.5" y="4" width="8" height="8" fill="#e6d860" stroke="#6a6420" stroke-width="0.8" /><circle cx="6.5" cy="17.5" r="3.6" fill="#f4f4f4" stroke="#3a3a3a" stroke-width="1.2" /><path d="M8 16 L17 7" fill="none" stroke="#e8f0ff" stroke-width="1.2" /><path d="M16 0 L17 6 L22 2 L18.5 7.5 L24 8 L18.5 9.5 L22 14 L17 10.5 L16 16 L15 10.5 L10 13 L13.8 8.5 L9 7 L14.5 6.5Z" fill="#e6f2ff" /><circle cx="16.3" cy="8" r="2.6" fill="#fff" /></svg>
<span class="t" style="left:1118.5px;width:120px;text-align:center;top:73px;">组</span>
<svg style="left:1196px;top:44px" width="14" height="14" viewBox="0 0 16 16"><rect x="1.5" y="2" width="6" height="4.5" fill="#e8d850" stroke="#5a5418" stroke-width="0.6" /><circle cx="4" cy="12.5" r="1.8" fill="#f4f4f4" stroke="#444" stroke-width="0.6" /><path d="M5 11.5 L14 2.5" fill="none" stroke="#e0b040" stroke-width="1.4" /><path d="M13 1 L15.5 1 L15.5 3.5" fill="none" stroke="#e8d8a0" stroke-width="1" /></svg>
<svg style="left:1196.5px;top:63.5px" width="13" height="13" viewBox="0 0 16 16"><rect x="2" y="1" width="9" height="14" fill="none" stroke="#9a9a9a" stroke-width="0.8" stroke-dasharray="1.5 1.2"/><circle cx="5.5" cy="4.5" r="1.4" fill="#e8e8e8" /><circle cx="5.5" cy="11.5" r="1.4" fill="#e8e8e8" /><path d="M10 5 V9 M8 7 H12" fill="none" stroke="#8ab8f0" stroke-width="1.2" /><path d="M9.5 11.5 H13" fill="none" stroke="#8ab8f0" stroke-width="1.1" /></svg>
<div style="left:1195px;top:81px;width:18px;height:17.5px;border:1px solid #3d5588;background:linear-gradient(#7592cc,#5272b2)"></div>
<svg style="left:1197.5px;top:83.2px" width="13" height="13" viewBox="0 0 16 16"><rect x="1.5" y="1" width="6" height="14" fill="none" stroke="#e8f0ff" stroke-width="0.8" stroke-dasharray="1.5 1.2"/><circle cx="4.5" cy="4.5" r="1.3" fill="#f4f8ff" /><circle cx="4.5" cy="11" r="1.3" fill="#f4f8ff" /><path d="M9 3 L9 13 L11.4 10.8 L13 14.5 L14.4 13.8 L12.8 10.2 L15.5 10Z" fill="#f8f8f8" stroke="#1a2a5a" stroke-width="0.7" /></svg>
<span class="t" style="left:1178px;top:103.6px;">组</span>
<i class="dd" style="left:1192px;top:106.5px"></i>
<svg style="left:1227px;top:46px" width="24" height="24" viewBox="0 0 24 24"><path d="M2 3 H10 V7 H22 V17 H2Z" fill="#f2f2f2" stroke="#3a3a3a" stroke-width="0.8" /><path d="M2 15 H22 V17 H2Z" fill="#c4c4c4" /></svg>
<span class="t" style="left:1179px;width:120px;text-align:center;top:74px;">基点</span>
<i class="dd2" style="left:1237px;top:87.8px"></i>
<span class="t" style="left:1219px;top:103.6px;">视图</span>
<i class="dd" style="left:1243px;top:106.5px"></i>
<i style="left:1256px;top:109px;width:3px;height:3px;background:#ccc"></i>
<svg style="left:0;top:117.3px" width="260" height="20" viewBox="0 0 260 20"><defs><linearGradient id="tg1" x1="0" y1="0" x2="0" y2="1"><stop offset="0" stop-color="#5e5e5e"/><stop offset="1" stop-color="#4a4a4a"/></linearGradient><linearGradient id="tg2" x1="0" y1="0" x2="0" y2="1"><stop offset="0" stop-color="#7a7a7a"/><stop offset=".5" stop-color="#626262"/><stop offset="1" stop-color="#585858"/></linearGradient></defs><path d="M10 19.5 C15 19 17 14 19 8 C20.5 3.5 22 2 26 2 L112 2 C116 2 117 4 118 8 L121 19.5Z" fill="url(#tg1)" /><path d="M112 19.5 C117 19 119 14 121 8 C122.5 3.5 124 2 128 2 L208 2 C212 2 214 3.5 215.5 8 C217.5 14 219 19 224 19.5Z" fill="url(#tg2)" /><path d="M222 5 H236 C238.5 5 240 6.5 240 9 V13 C240 15.5 238.5 17 236 17 H226 C223 17 220 10 219.5 5Z" fill="#454545" /><path d="M229.5 7.5 V14.5 M226 11 H233" fill="none" stroke="#dcdcdc" stroke-width="1.5" /><path d="M200.5 8 L205.5 13 M205.5 8 L200.5 13" fill="none" stroke="#4c4c4c" stroke-width="1.2" /></svg>
<span class="t" style="left:29px;top:123px;color:#a8a8a8;">开始</span>
<span class="t" style="left:127px;top:123px;font-size:10px;color:#f0f0f0;">mug*</span>
<span class="t" style="left:6px;top:146px;font-size:9.6px;color:#d4d6da;letter-spacing:0;font-weight:bold;">[−][自定义视图][着色]</span>
<div style="left:1217px;top:153px;width:7px;height:2px;background:#e8e8e8"></div>
<div style="left:1232px;top:149px;width:6px;height:6px;border:1.5px solid #e8e8e8"></div>
<div style="left:1234px;top:148px;width:5px;height:2px;background:#e8e8e8"></div>
<svg style="left:1247px;top:148px" width="8" height="8" viewBox="0 0 16 16"><path d="M2 2 L14 14 M14 2 L2 14" fill="none" stroke="#f0f0f0" stroke-width="3" /></svg>
<svg style="left:4px;top:140px" width="1260" height="493" viewBox="4 140 1260 493"><defs><linearGradient id="body" x1="0" y1="0" x2="1" y2="0"><stop offset="0" stop-color="#2894c4"/><stop offset=".04" stop-color="#1f8aba"/><stop offset=".14" stop-color="#1279a4"/><stop offset=".35" stop-color="#0f739e"/><stop offset=".6" stop-color="#10759f"/><stop offset=".69" stop-color="#2a92be"/><stop offset=".765" stop-color="#3ba1cc"/><stop offset=".88" stop-color="#2b91be"/><stop offset="1" stop-color="#1c81ae"/></linearGradient><linearGradient id="inner" x1="0" y1="0" x2="1" y2="0"><stop offset="0" stop-color="#197eae"/><stop offset=".07" stop-color="#2a8fc0"/><stop offset=".15" stop-color="#3b9fcc"/><stop offset=".27" stop-color="#2a8dbc"/><stop offset=".45" stop-color="#10729f"/><stop offset=".8" stop-color="#0d6c99"/><stop offset="1" stop-color="#1174a1"/></linearGradient><linearGradient id="rim" x1="0" y1="0" x2="1" y2="0"><stop offset="0" stop-color="#2c9ccc"/><stop offset=".5" stop-color="#2e9ed0"/><stop offset="1" stop-color="#228cbc"/></linearGradient><linearGradient id="hdl" x1="0" y1="0" x2="1" y2="1"><stop offset="0" stop-color="#1581b3"/><stop offset=".45" stop-color="#1888bc"/><stop offset="1" stop-color="#249acd"/></linearGradient><radialGradient id="hl2" cx=".5" cy=".5" r=".5"><stop offset="0" stop-color="#34b4e6" stop-opacity=".85"/><stop offset="1" stop-color="#249acd" stop-opacity="0"/></radialGradient><radialGradient id="hl" cx=".5" cy=".5" r=".5"><stop offset="0" stop-color="#7fd4f4" stop-opacity=".9"/><stop offset="1" stop-color="#2fa4d8" stop-opacity="0"/></radialGradient></defs><path d="M491 446.5 L556 434.3" fill="none" stroke="#2f8fc4" stroke-width="1" /><ellipse cx="545" cy="428.5" rx="16" ry="10.3" fill="none" stroke="#3597cc" stroke-width="1.2" /><path d="M489.0 266.5 C492.2 266.1 501.3 263.9 508.0 264.0 C514.7 264.1 523.0 264.9 529.0 267.0 C535.0 269.1 539.8 272.5 544.0 276.5 C548.2 280.5 551.6 285.6 554.0 291.0 C556.4 296.4 557.6 302.1 558.5 309.0 C559.4 315.9 559.6 324.7 559.5 332.5 C559.4 340.3 559.2 348.1 558.0 356.0 C556.8 363.9 554.8 372.7 552.5 380.0 C550.2 387.3 547.9 393.9 544.0 400.0 C540.1 406.1 534.0 412.2 529.0 416.5 C524.0 420.8 518.9 423.7 514.0 425.5 C509.1 427.3 503.7 427.7 499.5 427.5 C495.3 427.3 490.8 425.0 489.0 424.5 L489.0 397.8 C491.7 396.8 500.9 394.5 505.4 391.5 C509.8 388.5 512.8 384.6 515.7 379.7 C518.6 374.8 521.2 368.9 523.0 362.0 C524.8 355.1 525.9 345.8 526.6 338.5 C527.4 331.2 527.9 324.1 527.5 318.0 C527.1 311.9 526.0 305.6 524.5 301.6 C523.0 297.7 521.8 295.1 518.6 294.3 C515.4 293.5 510.3 295.3 505.4 296.6 C500.5 297.9 491.7 301.1 489.0 302.0Z" fill="url(#hdl)" /><path d="M491.0 300.0 C493.4 299.3 500.8 296.7 505.4 295.6 C510.0 294.5 515.2 292.3 518.6 293.3 C522.0 294.3 523.9 297.5 525.5 301.6 C527.1 305.7 528.1 311.9 528.5 318.0 C528.9 324.1 528.4 331.2 527.6 338.5 C526.9 345.8 525.8 355.0 524.0 362.0 C522.2 369.0 517.9 377.4 516.7 380.5" fill="none" stroke="#0d6698" stroke-width="3" opacity=".75" stroke-linecap="round"/><path d="M493.0 270.0 C495.8 269.7 504.2 267.8 510.0 268.0 C515.8 268.2 522.8 269.5 528.0 271.5 C533.2 273.5 537.3 276.2 541.0 280.0 C544.7 283.8 547.8 288.7 550.0 294.0 C552.2 299.3 553.3 309.0 554.0 312.0" fill="none" stroke="#3aa6da" stroke-width="3.5" opacity=".6" stroke-linecap="round"/><path d="M556.5 330.0 C556.2 334.3 556.2 347.7 555.0 356.0 C553.8 364.3 551.8 372.8 549.5 380.0 C547.2 387.2 542.4 395.8 541.0 399.0" fill="none" stroke="#1577aa" stroke-width="3" opacity=".7" stroke-linecap="round"/><ellipse cx="525" cy="404" rx="17" ry="30" fill="url(#hl2)" transform="rotate(40 525 404)"/><ellipse cx="527" cy="402" rx="9" ry="20" fill="url(#hl)" transform="rotate(38 527 402)"/><path d="M552.5 380.0 C551.1 383.3 547.9 393.9 544.0 400.0 C540.1 406.1 534.0 412.2 529.0 416.5 C524.0 420.8 518.9 423.7 514.0 425.5 C509.1 427.3 503.3 427.6 499.5 427.5 C495.7 427.4 492.4 425.4 491.0 425.0" fill="none" stroke="#0f6c9e" stroke-width="2" opacity=".55" stroke-linecap="round"/><path d="M305 262.5 L305.0 462.0 C306.7 463.8 310.8 469.8 315.0 473.0 C319.2 476.2 323.7 478.4 330.5 481.0 C337.3 483.6 347.6 486.7 355.8 488.6 C364.1 490.5 372.5 491.5 380.0 492.3 C387.5 493.1 394.3 493.5 401.0 493.6 C407.7 493.7 414.1 493.4 420.0 493.0 C425.9 492.6 429.6 492.8 436.6 491.0 C443.6 489.2 454.2 486.3 461.8 482.3 C469.4 478.3 477.1 471.9 482.0 467.0 C486.9 462.1 489.5 455.3 491.0 453.0 L491 262.5Z" fill="url(#body)" /><ellipse cx="398" cy="262.5" rx="93" ry="38.5" fill="url(#rim)" /><ellipse cx="398" cy="264" rx="84" ry="33.5" fill="url(#inner)" /><path d="M314 264 A84 33.5 0 0 0 482 264" fill="none" stroke="#3aa6dc" stroke-width="1.5" opacity=".8"/><path d="M305 262.5 A93 38.5 0 0 0 491 262.5" fill="none" stroke="#1678aa" stroke-width="1" opacity=".8"/><path d="M398.5 253 V296" fill="none" stroke="#5a4ed2" stroke-width="1.1" /><path d="M297.5 472.5 L306 471" fill="none" stroke="#9a20b8" stroke-width="1.3" /><path d="M434 489.5 L439 493" fill="none" stroke="#8a20a8" stroke-width="1.3" /><path d="M489 448 L494 446.5" fill="none" stroke="#9a20b8" stroke-width="1.2" /><path d="M518.5 318.5 L595.5 304.6" fill="none" stroke="#a4444c" stroke-width="1" /><path d="M521 295 L554 325" fill="none" stroke="#6aa850" stroke-width="1" /><path d="M543 263 V339" fill="none" stroke="#7a62c8" stroke-width="1" /><rect x="540.5" y="311.5" width="5" height="5" fill="#21405a" stroke="#f0f0f0" stroke-width="1.1" /><path d="M380 534.4 L548 502.8 L631.2 582.3 L462 613.8Z" fill="none" stroke="#3a8fc8" stroke-width="1.4" /><path d="M386.4 535.2 L459.8 605 L616 573.5 L545.4 505.3" fill="none" stroke="#d2a62c" stroke-width="1.5" stroke-dasharray="10 5"/><path d="M456 510.5 L550.4 603.8" fill="none" stroke="#8e20ac" stroke-width="1.5" stroke-dasharray="30 4 3 4"/><path d="M559.3 512.9 C564.8 511.8 581.9 506.8 592.0 506.0 C602.1 505.2 610.7 505.5 620.0 507.9 C629.3 510.3 639.6 515.5 647.6 520.5 C655.6 525.5 663.8 532.5 667.8 538.0 C671.8 543.5 672.0 548.9 671.6 553.3 C671.2 557.7 669.3 561.5 665.3 564.6 C661.3 567.8 654.3 570.4 647.6 572.2 C640.9 574.0 628.7 575.0 624.9 575.5" fill="none" stroke="#3a8fc8" stroke-width="1.4" /><path d="M564.3 518.0 C568.9 517.1 583.2 513.2 592.0 512.4 C600.8 511.6 609.3 511.4 617.3 513.4 C625.3 515.4 633.7 520.2 640.0 524.3 C646.3 528.4 652.0 533.7 655.2 538.1 C658.4 542.5 659.4 547.0 659.0 550.8 C658.6 554.6 656.2 558.2 652.6 560.9 C649.0 563.6 643.0 565.7 637.5 567.2 C632.0 568.7 622.8 569.3 619.8 569.7" fill="none" stroke="#3a8fc8" stroke-width="1.4" /><path d="M751 463 L920 432.1 L1001.7 510.5 L832.7 542.5Z" fill="none" stroke="#3a8fc8" stroke-width="1.4" /><path d="M757.7 464.2 L831.6 533.7 L988.4 505 L915.5 434.4" fill="none" stroke="#d2a62c" stroke-width="1.5" stroke-dasharray="10 5"/><path d="M826.1 460.8 L867 454.2 L927.7 511.6 L885.7 520.5Z" fill="none" stroke="#3a8fc8" stroke-width="1.3" /><path d="M832.7 467.5 L891 524" fill="none" stroke="#3a8fc8" stroke-width="1" /><path d="M826.5 461.8 L867 455.2" fill="none" stroke="#d8dc78" stroke-width="1.8" stroke-dasharray="9 4"/><path d="M831 467.5 L872.5 461" fill="none" stroke="#d2a62c" stroke-width="1.4" stroke-dasharray="9 4"/><path d="M883.5 517.2 L923.5 509.4" fill="none" stroke="#d2a62c" stroke-width="1.4" stroke-dasharray="9 4"/><path d="M886 523.5 L930 516" fill="none" stroke="#e4e66a" stroke-width="2" stroke-dasharray="9 4"/><path d="M832.7 442 L921 530.4" fill="none" stroke="#8e20ac" stroke-width="1.5" stroke-dasharray="26 4 3 4"/><path d="M43 591 L78 585.2" fill="none" stroke="#c4505e" stroke-width="3.8" stroke-linecap="round"/><path d="M43 591 L27.5 576.5" fill="none" stroke="#48a448" stroke-width="3.8" stroke-linecap="round"/><path d="M43 591 V557.5" fill="none" stroke="#4a78c8" stroke-width="4" stroke-linecap="round"/><path d="M43 589 V558" fill="none" stroke="#6f9be2" stroke-width="1.4" /><text x="41" y="554" font-size="13" font-weight="bold" fill="#2c5ab4" font-family="Liberation Sans,sans-serif">Z</text><text x="76.5" y="580.5" font-size="13" fill="#8c3444" font-family="Liberation Sans,sans-serif">X</text><text x="25" y="572.5" font-size="12" fill="#3f7250" font-family="Liberation Sans,sans-serif">Y</text><ellipse cx="1205.5" cy="238.6" rx="40.5" ry="18.6" fill="#1c212c" stroke="#494d59" stroke-width="6.2" /><path d="M1185 199.6 L1212 193.2 L1229 203.6 L1228.8 233.4 L1198.2 240.9 L1186.6 231.4Z" fill="#5c5e64" /><path d="M1185.8 200.2 L1212 194 L1228.2 203.9 L1198.3 209.4Z" fill="#cdcdcd" /><path d="M1185.8 200.2 L1198.3 209.4 L1198.3 240.1 L1187.2 231Z" fill="#a4a4a6" /><path d="M1198.3 209.4 L1228.2 203.9 L1228 232.9 L1198.3 240.1Z" fill="#bebebe" /><path d="M1198.3 209.4 V240" fill="none" stroke="#8a8a8c" stroke-width="0.8" /><path d="M1185.8 200.2 L1198.3 209.4 L1228.2 203.9" fill="none" stroke="#9a9a9c" stroke-width="0.8" /><text x="1204.5" y="230.5" font-size="17" fill="#34363c" font-family="Noto Serif CJK SC,Noto Sans CJK SC,serif" transform="skewY(-10)" style="transform-origin:1213px 222px">前</text><text x="1187" y="226" font-size="13" fill="#4a4c52" font-family="Noto Serif CJK SC,serif" transform="skewY(36) scale(.5 1)" style="transform-origin:1192px 220px">左</text><text x="1202" y="203.5" font-size="7" fill="#4a4c52" font-family="Noto Serif CJK SC,serif" transform="skewX(-30)" style="transform-origin:1205px 201px">上</text><text x="1168.5" y="246" font-size="8.5" fill="#b4b4b8" text-anchor="middle" transform="rotate(25 1168.5 246)" font-family="Liberation Sans,sans-serif" font-weight="bold">W</text><text x="1226" y="259" font-size="8.5" fill="#b4b4b8" text-anchor="middle" transform="rotate(25 1226 259)" font-family="Liberation Sans,sans-serif" font-weight="bold">W</text><text x="1243" y="229.5" font-size="8.5" fill="#b4b4b8" text-anchor="middle" transform="rotate(-30 1243 229.5)" font-family="Liberation Sans,sans-serif" font-weight="bold">W</text><rect x="1183.5" y="277.5" width="46" height="13" fill="#a2a6b2" stroke="#6a6e7a" stroke-width="0.8" rx="2.5"/><text x="1187" y="287.5" font-size="8.5" fill="#3a3c44" font-family="Noto Sans CJK SC,sans-serif">未命名</text><rect x="1217" y="281" width="8" height="6" fill="none" stroke="#7a7e8a" stroke-width="0.8" /><rect x="1236" y="311" width="25" height="167" fill="#535865" rx="3"/><circle cx="1248.5" cy="334" r="8" fill="none" stroke="#464b5c" stroke-width="1.4" /><circle cx="1248.5" cy="334" r="4.5" fill="none" stroke="#464b5c" stroke-width="1.2" /><path d="M1243 366 C1241 356 1256 354 1255 366 C1255 374 1244 374 1243 366Z M1247 362 V352" fill="none" stroke="#464b5c" stroke-width="1.3" /><path d="M1241 384 L1256 398 M1256 384 L1241 398" fill="none" stroke="#464b5c" stroke-width="1.6" /><rect x="1253" y="394" width="5" height="5" fill="none" stroke="#464b5c" stroke-width="1" /><path d="M1248.5 408 V428 M1240 419 H1257" fill="none" stroke="#464b5c" stroke-width="1.4" /><ellipse cx="1248.5" cy="419" rx="6" ry="3" fill="none" stroke="#464b5c" stroke-width="1" /><rect x="1241" y="444" width="15" height="16" fill="none" stroke="#464b5c" stroke-width="1.2" /><path d="M1246 450 L1252 453.5 L1246 457Z" fill="#464b5c" /><path d="M1241 447 H1256" fill="none" stroke="#464b5c" stroke-width="1" /><rect x="1247.5" y="348" width="2" height="2" fill="#464b5c" /><rect x="1247.5" y="378" width="2" height="2" fill="#464b5c" /><rect x="1247.5" y="403" width="2" height="2" fill="#464b5c" /><rect x="1247.5" y="434" width="2" height="2" fill="#464b5c" /></svg>
<div style="left:4px;top:629px;width:1260px;height:4.5px;background:linear-gradient(rgba(20,24,32,0),rgba(20,24,32,.75))"></div>
<div style="left:4px;top:633px;width:18px;height:53px;background:#4e4e4e"></div>
<div style="left:5px;top:634px;width:16px;height:6px;background:linear-gradient(#8a8a8a,#6a6a6a)"></div>
<svg style="left:8.5px;top:647.5px" width="8" height="8" viewBox="0 0 16 16"><path d="M2 2 L14 14 M14 2 L2 14" fill="none" stroke="#f2f2f2" stroke-width="2.6" /></svg>
<svg style="left:5.5px;top:663px" width="14" height="14" viewBox="0 0 16 16"><path d="M5.2 1.2 C3 1 1.2 3 1.4 5.2 C1.6 7 3.2 8.2 5 8 L11.6 14.6 C12.6 15.6 14.8 14 13.8 12.6 L7.6 5.6 C8.2 3.8 7.2 2 5.2 1.2Z" fill="#f2f2f2" /><path d="M4.8 1.4 L5.2 4 L3.4 5.4 L1.5 4.6" fill="#4e4e4e" stroke="#4e4e4e" stroke-width="0.6" /></svg>
<div style="left:22px;top:668px;width:1242px;height:17px;background:#fff;border-top:1px solid #b4b4b4"></div>
<div style="left:4px;top:685px;width:1260px;height:1px;background:#8a8a8a"></div>
<span class="t" style="left:24px;top:643.5px;font-size:10px;color:#383838;font-family:'Liberation Mono','Noto Sans CJK SC',monospace;letter-spacing:-0.1px;font-weight:400;">选择要扫掠的对象或 [模式(MO)]:</span>
<span class="t" style="left:24px;top:656px;font-size:10px;color:#383838;font-family:'Liberation Mono','Noto Sans CJK SC',monospace;letter-spacing:-0.1px;font-weight:400;">选择扫掠路径或 [对齐(A)/基点(B)/比例(S)/扭曲(T)]:</span>
<div style="left:25px;top:671px;width:13px;height:12px;background:linear-gradient(#d4d6e4,#c0c2d6);border-radius:2px"></div>
<svg style="left:27px;top:672.5px" width="9" height="9" viewBox="0 0 16 16"><path d="M3 3 L9 8 L3 13 M9 13 H14" fill="none" stroke="#8a8cb0" stroke-width="2" /></svg>
<i style="left:40px;top:676.5px;width:0;height:0;border-left:2.5px solid transparent;border-right:2.5px solid transparent;border-top:3px solid #6a6a6a"></i>
<span class="t" style="left:52px;top:671px;font-size:9.5px;color:#9a9a9a;font-style:italic;transform:skewX(-12deg);">键入命令</span>
<div style="left:1217px;top:633px;width:44px;height:45px;background:linear-gradient(#505050,#303030 40%,#1c1c1c);border-radius:5px;border:1px solid #4a4a4a"></div>
<svg style="left:1224px;top:635.5px" width="30" height="30" viewBox="0 0 30 30"><path d="M13.5 7.5 L2.5 15 L13.5 22.5" fill="none" stroke="#c4c4c4" stroke-width="2.6" /><path d="M16.5 7.5 L27.5 15 L16.5 22.5" fill="none" stroke="#fff" stroke-width="2.6" /></svg>
<span class="t" style="left:1179.5px;width:120px;text-align:center;top:663.5px;font-size:8.5px;color:#fff;font-weight:bold;">嵌入</span>
<svg style="left:13px;top:692px" width="16" height="15" viewBox="0 0 16 15"><path d="M1 1 L15 7.5 L1 14Z" fill="#f4f4f4" /></svg>
<span class="t" style="left:40.5px;top:693.5px;font-size:8.8px;color:#f0f0f0;letter-spacing:.5px;">02:06</span>
<div style="left:72px;top:692px;width:1100px;height:14px;background:#1a1a1a;border-radius:2px"></div>
<div style="left:78px;top:693px;width:1089px;height:12px;background:linear-gradient(#94802a,#7c6a1e)"></div>
<div style="left:78px;top:693px;width:1008px;height:12px;background:linear-gradient(#f0aa18,#e29a08 60%,#d89206)"></div>
<span class="t" style="left:1178px;top:693.5px;font-size:8.8px;color:#e8e8e8;letter-spacing:.4px;">02:16</span>
<svg style="left:1218.5px;top:692px" width="15" height="15" viewBox="0 0 16 16"><path d="M1 1 L7 7 M7 2.5 V7 H2.5 M15 15 L9 9 M9 13.5 V9 H13.5" fill="none" stroke="#f0f0f0" stroke-width="2" /></svg>
<svg style="left:1237.5px;top:689.5px" width="20" height="20" viewBox="0 0 16 16"><path d="M0.5 5.5 H3.5 L7.5 2 V14 L3.5 10.5 H0.5Z" fill="#f0f0f0" /><path d="M9.3 5.5 C10.5 6.8 10.5 9.2 9.3 10.5 M11.3 3.6 C13.6 6 13.6 10 11.3 12.4 M13.4 1.8 C16.8 5 16.8 11 13.4 14.2" fill="none" stroke="#f0f0f0" stroke-width="1.4" /></svg>
</div>
</div>
</body>
</html>
